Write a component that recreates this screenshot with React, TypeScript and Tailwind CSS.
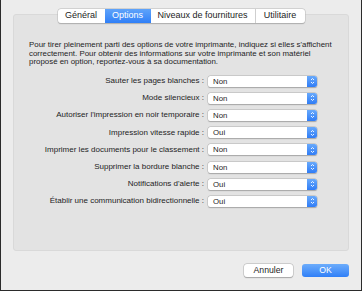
import { ReactNode } from "react";

const rows: [string, string][] = [
  ["Sauter les pages blanches :", "Non"],
  ["Mode silencieux :", "Non"],
  ["Autoriser l'impression en noir temporaire :", "Non"],
  ["Impression vitesse rapide :", "Oui"],
  ["Imprimer les documents pour le classement :", "Non"],
  ["Supprimer la bordure blanche :", "Non"],
  ["Notifications d'alerte :", "Oui"],
  ["Établir une communication bidirectionnelle :", "Oui"],
];

const tabs = ["Général", "Options", "Niveaux de fournitures", "Utilitaire"];

// popup menu look-alike
const PopUp = ({ value }: { value: string }) => (
  <div className="flex h-[11px] w-[109px] items-stretch rounded-[2.5px] bg-white shadow-[0_0_0_0.5px_#b8b8b8,0_0.5px_1px_#9a9a9a]">
    <span className="flex-1 pl-[5px] text-[7.8px] leading-[11px] text-[#1d1d1d]">{value}</span>
    <span className="flex w-[10px] items-center justify-center rounded-r-[2.5px] bg-gradient-to-b from-[#68a9fb] to-[#2f7cf6]">
      <svg width="5" height="8" viewBox="0 0 5 8" fill="none" stroke="white" strokeWidth="0.9">
        <path d="M1 3 L2.5 1.5 L4 3" />
        <path d="M1 5 L2.5 6.5 L4 5" />
      </svg>
    </span>
  </div>
);

const Button = ({ children, primary }: { children: ReactNode; primary?: boolean }) => (
  <button
    className={
      primary
        ? "h-[13px] w-[47px] rounded-[3px] bg-gradient-to-b from-[#6cacfb] to-[#2f7ff7] text-[8.7px] leading-[13px] text-white"
        : "h-[13px] w-[49px] rounded-[3px] bg-white text-[8.7px] leading-[13px] text-[#1d1d1d] shadow-[0_0_0_0.5px_#b5b5b5,0_0.5px_1px_#9c9c9c]"
    }
  >
    {children}
  </button>
);

export default function App() {
  return (
    <div
      className="flex h-[291px] w-[362px] flex-col border-x border-b border-[#2b2b2b] bg-[#ececec] px-[12px]"
      style={{ fontFamily: '"Liberation Sans", Arial, sans-serif' }}
    >
      {/* TABS */}
      <div className="relative z-10 mt-[9px] flex justify-center">
        <div className="flex h-[14px] rounded-[3px] bg-white text-[9px] leading-[13px] text-[#1d1d1d] shadow-[0_0_0_0.5px_#bdbdbd,0_0.5px_1px_#a0a0a0]">
          {tabs.map((t, i) => (
            <span
              key={t}
              className={
                i === 1
                  ? "w-[46px] bg-gradient-to-b from-[#5fa3fa] to-[#2f7ff7] text-center text-white"
                  : i === 0
                  ? "w-[47px] text-center"
                  : i === 2
                  ? "w-[105px] border-r border-[#cfcfcf] text-center"
                  : "w-[49px] text-center"
              }
            >
              {t}
            </span>
          ))}
        </div>
      </div>

      {/* PANEL */}
      <div className="-mt-[9px] h-[237px] w-[336px] rounded-[3px] border border-[#d9d9d9] bg-[#e3e3e3] pt-[26px] pl-[15px] text-[#1d1d1d]">
        <p className="whitespace-nowrap text-[7.9px] leading-[8.5px]">
          Pour tirer pleinement parti des options de votre imprimante, indiquez si elles s'affichent
          <br />
          correctement. Pour obtenir des informations sur votre imprimante et son matériel
          <br />
          proposé en option, reportez-vous à sa documentation.
        </p>

        <div className="mt-[6px] flex flex-col text-[8px]">
          {rows.map(([label, value]) => (
            <div key={label} className="flex h-[17.2px] items-center">
              <span className="w-[175px] whitespace-nowrap text-right">{label}</span>
              <span className="w-[4px]" />
              <PopUp value={value} />
            </div>
          ))}
        </div>
      </div>

      {/* FOOTER */}
      <div className="mt-[13px] flex justify-end gap-[9px]">
        <Button>Annuler</Button>
        <Button primary>OK</Button>
      </div>
    </div>
  );
}
